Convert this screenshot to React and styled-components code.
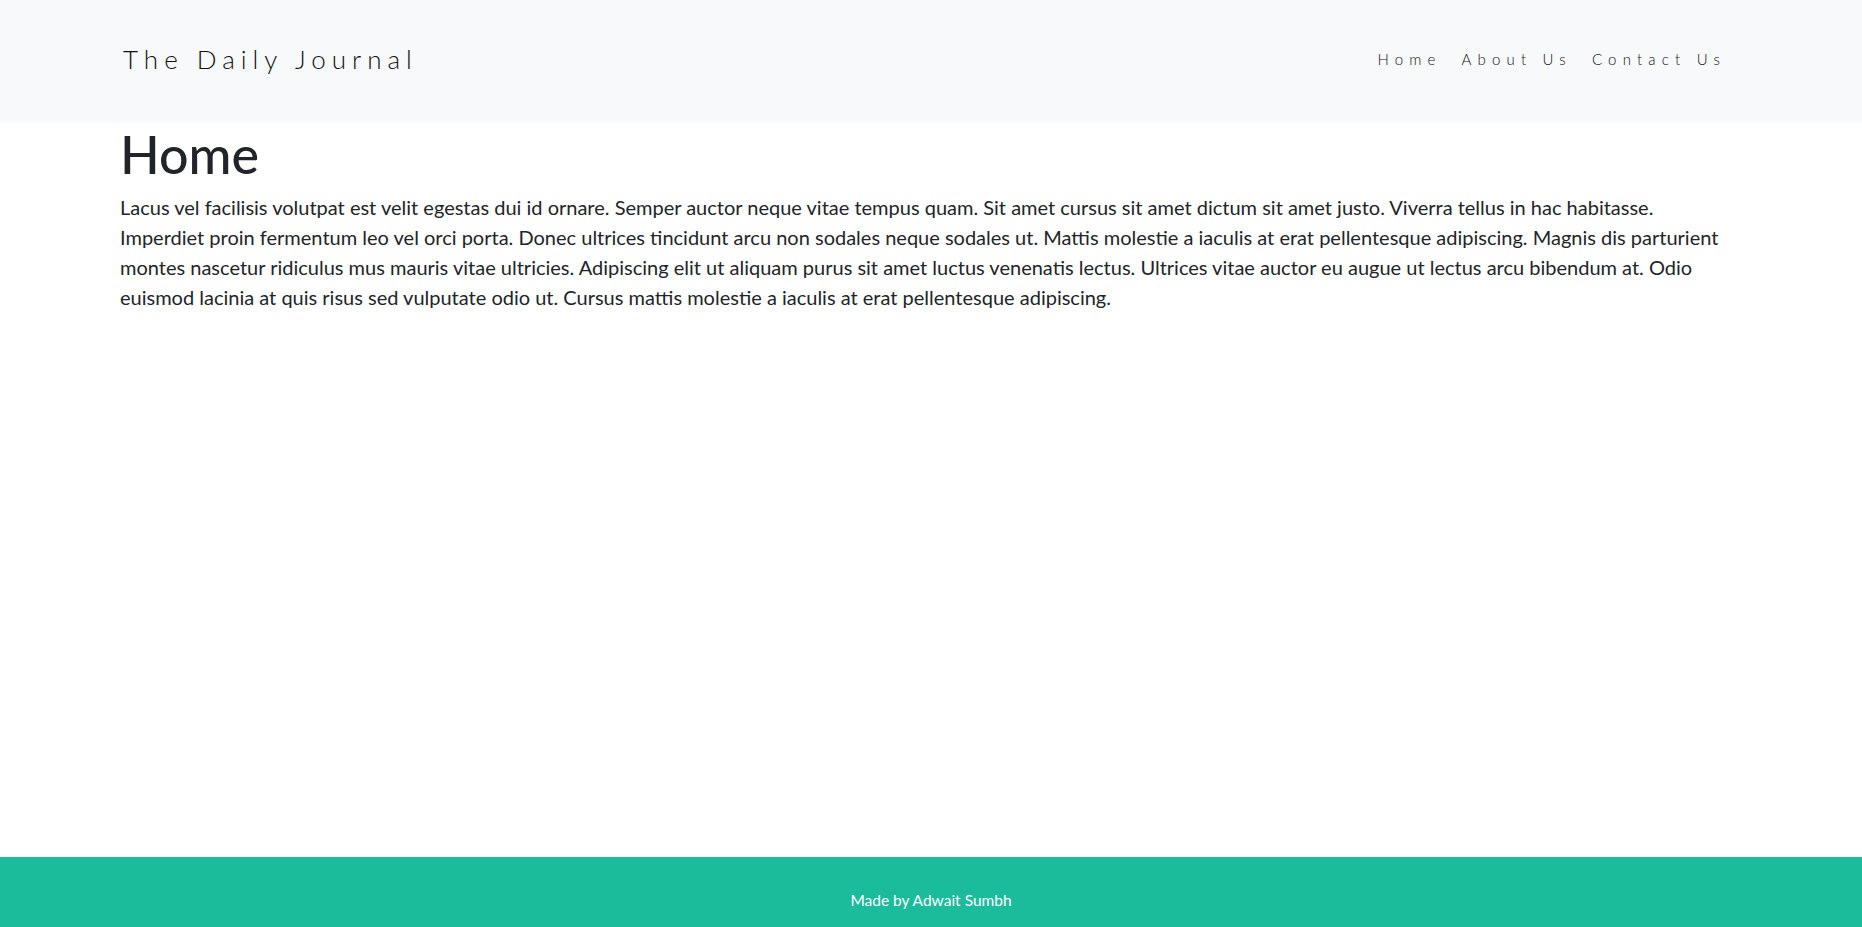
import React from 'react';
import styled, { createGlobalStyle } from 'styled-components';

const GlobalStyle = createGlobalStyle`
  *, *::before, *::after {
    box-sizing: border-box;
  }
  html, body {
    margin: 0;
    padding: 0;
  }
  body {
    font-family: Lato, "Noto Sans", sans-serif;
    color: #212529;
    background: #fff;
  }
`;

const Page = styled.div`
  min-height: 100vh;
  display: flex;
  flex-direction: column;
`;

const Header = styled.header`
  height: 123px;
  background: #f8f9fa;
  display: flex;
  align-items: center;
  justify-content: space-between;
  padding: 0 136px 5px 123px;
`;

const Brand = styled.a`
  font-size: 26px;
  font-weight: 300;
  letter-spacing: 6px;
  color: #111;
  text-decoration: none;
`;

const Nav = styled.nav`
  display: flex;
  gap: 20px;
`;

const NavLink = styled.a`
  font-size: 15px;
  font-weight: 300;
  letter-spacing: 6.2px;
  color: #111;
  text-decoration: none;
`;

const Main = styled.main`
  flex: 1;
  padding: 0 120px;
`;

const Title = styled.h1`
  margin: 0 0 7px;
  font-size: 52px;
  font-weight: 500;
  line-height: 1.2;
`;

const Text = styled.p`
  margin: 0;
  font-size: 20px;
  line-height: 30px;
`;

const Footer = styled.footer`
  height: 70px;
  background: #1abc9c;
  color: #fff;
  display: flex;
  align-items: center;
  justify-content: center;
  padding-top: 16px;
  font-size: 15.5px;
`;

const links = ['Home', 'About Us', 'Contact Us'];

const App = () => {
  return (
    <Page>
      <GlobalStyle />
      <Header>
        <Brand href="#">The Daily Journal</Brand>
        <Nav>
          {links.map((l) => (
            <NavLink key={l} href="#">{l}</NavLink>
          ))}
        </Nav>
      </Header>
      <Main>
        <Title>Home</Title>
        <Text>
          Lacus vel facilisis volutpat est velit egestas dui id ornare. Semper auctor neque vitae tempus quam. Sit amet cursus sit amet dictum sit amet justo. Viverra tellus in hac habitasse. Imperdiet proin fermentum leo vel orci porta. Donec ultrices tincidunt arcu non sodales neque sodales ut. Mattis molestie a iaculis at erat pellentesque adipiscing. Magnis dis parturient montes nascetur ridiculus mus mauris vitae ultricies. Adipiscing elit ut aliquam purus sit amet luctus venenatis lectus. Ultrices vitae auctor eu augue ut lectus arcu bibendum at. Odio euismod lacinia at quis risus sed vulputate odio ut. Cursus mattis molestie a iaculis at erat pellentesque adipiscing.
        </Text>
      </Main>
      <Footer>Made by Adwait Sumbh</Footer>
    </Page>
  );
};

export default App;
